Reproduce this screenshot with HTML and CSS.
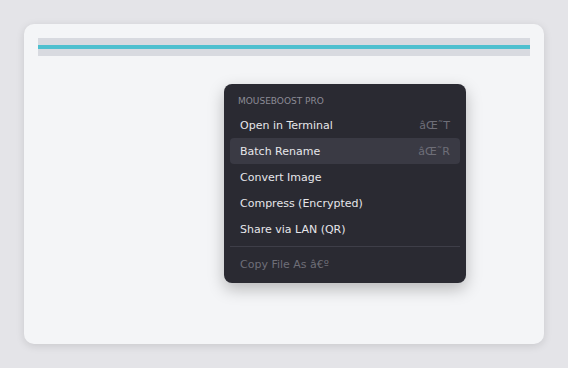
FILE: index.html
```html
<!DOCTYPE html>
<html lang="en">
<head>
    <meta charset="UTF-8">
    <meta name="viewport" content="width=device-width, initial-scale=1.0">
    <title>MouseBoost</title>
    <link rel="stylesheet" href="styles.css">
</head>
<body>

    <div class="window">
        <div class="progress">
            <div class="progress-line"></div>
        </div>

        <div class="menu">
            <div class="menu-title">MOUSEBOOST PRO</div>
            <div class="item">
                <span>Open in Terminal</span>
                <span class="shortcut">âŒ˜T</span>
            </div>
            <div class="item active">
                <span>Batch Rename</span>
                <span class="shortcut">âŒ˜R</span>
            </div>
            <div class="item">
                <span>Convert Image</span>
            </div>
            <div class="item">
                <span>Compress (Encrypted)</span>
            </div>
            <div class="item">
                <span>Share via LAN (QR)</span>
            </div>
            <div class="sep"></div>
            <div class="item disabled">
                <span>Copy File As â€º</span>
            </div>
        </div>
    </div>

</body>
</html>
```

FILE: styles.css
```css
*{
    margin: 0;
    padding: 0;
    box-sizing: border-box;
}
body{
    background-color: #e4e4e8;
    font-family: "DejaVu Sans", sans-serif;
    padding: 24px;
    height: 368px;
}
.window{
    position: relative;
    height: 320px;
    background-color: #f4f5f7;
    border-radius: 10px;
    box-shadow: 0 2px 8px rgba(0, 0, 0, 0.12);
    padding: 14px;
}
.progress{
    height: 18px;
    background-color: #d8dae0;
    display: flex;
    align-items: center;
}
.progress-line{
    width: 100%;
    height: 4px;
    background-color: #4ec0cf;
}
.menu{
    position: absolute;
    left: 200px;
    top: 60px;
    width: 242px;
    padding: 6px;
    background-color: #2a2a32;
    border-radius: 8px;
    box-shadow: 0 6px 16px rgba(0, 0, 0, 0.25);
}
.menu-title{
    height: 22px;
    line-height: 22px;
    padding-left: 8px;
    font-size: 9px;
    color: #8c8c96;
}
.item{
    display: flex;
    justify-content: space-between;
    align-items: center;
    height: 26px;
    padding: 0 10px;
    font-size: 11px;
    color: #e6e6ea;
    border-radius: 4px;
}
.active{
    background-color: #3a3a44;
}
.shortcut{
    color: #6e6e78;
}
.disabled{
    color: #6e6e78;
}
.sep{
    height: 1px;
    margin: 4px 0;
    background-color: #3e3e48;
}
```
